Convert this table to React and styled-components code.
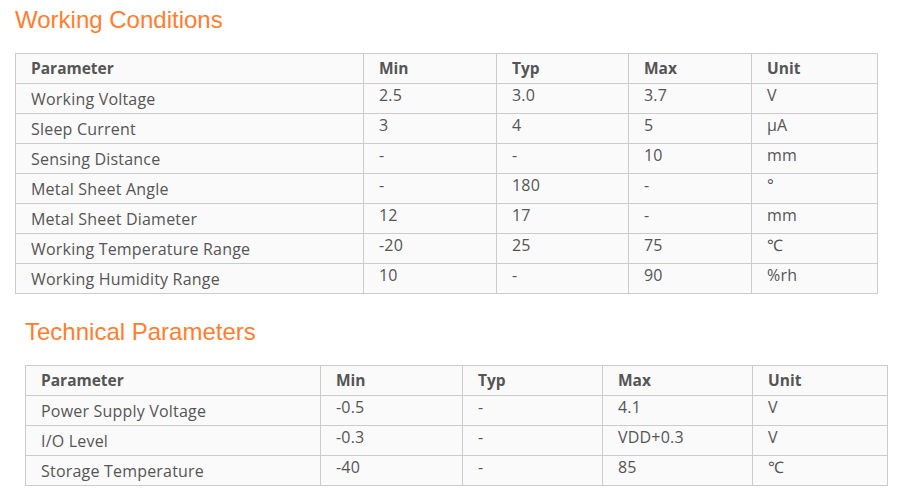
import React from "react";
import styled, { createGlobalStyle } from "styled-components";

const GlobalStyle = createGlobalStyle`
  body {
    margin: 0;
    background: #fff;
    font-family: "Open Sans", "Noto Sans", sans-serif;
  }
`;

const Page = styled.div`
  padding: 5px 0 0 15px;
`;

const Section = styled.section`
  margin-left: ${p => p.$indent || 0}px;
  margin-bottom: ${p => p.$gap || 0}px;
`;

const Heading = styled.h2`
  margin: 0 0 18px;
  font-family: "Liberation Sans", Arial, sans-serif;
  font-weight: normal;
  font-size: 24px;
  line-height: 30px;
  color: #ff7d2d;
`;

const Table = styled.table`
  width: 862px;
  border-collapse: collapse;
  table-layout: fixed;
  background: #fafafa;
  color: #555;
  font-size: 16px;
`;

const Col = styled.col`
  width: ${p => p.$w}px;
`;

const Th = styled.th`
  padding: 4px 15px 4px;
  border: 1px solid #cccccc;
  text-align: left;
  font-weight: bold;
  font-size: 15.5px;
  line-height: 21px;
  color: #555;
`;

const Td = styled.td`
  padding: ${p => (p.$param ? "5px 15px 3px" : "1px 15px 7px")};
  border: 1px solid #cccccc;
  vertical-align: top;
  line-height: 21px;
  letter-spacing: 0.2px;
  color: #555;
`;

const DataTable = ({ cols, rows }) => (
  <Table>
    <colgroup>
      {cols.map((w, i) => (
        <Col key={i} $w={w} />
      ))}
    </colgroup>
    <thead>
      <tr>
        {["Parameter", "Min", "Typ", "Max", "Unit"].map(h => (
          <Th key={h}>{h}</Th>
        ))}
      </tr>
    </thead>
    <tbody>
      {rows.map(row => (
        <tr key={row[0]}>
          {row.map((cell, i) => (
            <Td key={i} $param={i === 0}>
              {cell}
            </Td>
          ))}
        </tr>
      ))}
    </tbody>
  </Table>
);

const working = [
  ["Working Voltage", "2.5", "3.0", "3.7", "V"],
  ["Sleep Current", "3", "4", "5", "µA"],
  ["Sensing Distance", "-", "-", "10", "mm"],
  ["Metal Sheet Angle", "-", "180", "-", "°"],
  ["Metal Sheet Diameter", "12", "17", "-", "mm"],
  ["Working Temperature Range", "-20", "25", "75", "℃"],
  ["Working Humidity Range", "10", "-", "90", "%rh"]
];

const technical = [
  ["Power Supply Voltage", "-0.5", "-", "4.1", "V"],
  ["I/O Level", "-0.3", "-", "VDD+0.3", "V"],
  ["Storage Temperature", "-40", "-", "85", "℃"]
];

const App = () => (
  <Page>
    <GlobalStyle />
    <Section $gap={23}>
      <Heading>Working Conditions</Heading>
      <DataTable cols={[348, 133, 132, 123, 126]} rows={working} />
    </Section>
    <Section $indent={10}>
      <Heading>Technical Parameters</Heading>
      <DataTable cols={[295, 142, 140, 150, 135]} rows={technical} />
    </Section>
  </Page>
);

export default App;
